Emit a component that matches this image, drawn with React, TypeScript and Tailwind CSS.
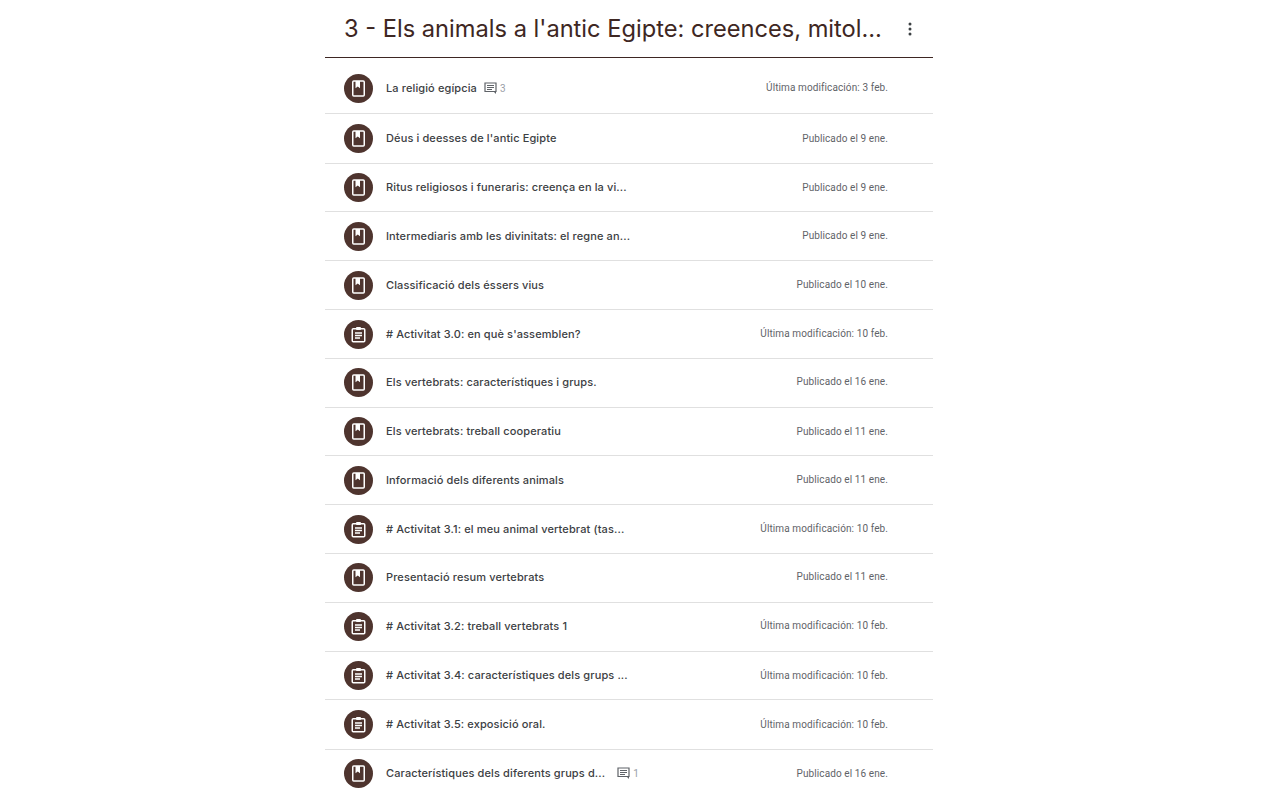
import React from 'react';

type Item = {
  title: string;
  date: string;
  kind: 'book' | 'task';
  comments?: number;
  height: string;
  commentGap?: string;
};

const items: Item[] = [
  { title: 'La religió egípcia', date: 'Última modificación: 3 feb.', kind: 'book', comments: 3, height: 'h-[56px] pt-[5px]' },
  { title: "Déus i deesses de l'antic Egipte", date: 'Publicado el 9 ene.', kind: 'book', height: 'h-[50px]' },
  { title: 'Ritus religiosos i funeraris: creença en la vi...', date: 'Publicado el 9 ene.', kind: 'book', height: 'h-[48px]' },
  { title: 'Intermediaris amb les divinitats: el regne an...', date: 'Publicado el 9 ene.', kind: 'book', height: 'h-[49px]' },
  { title: 'Classificació dels éssers vius', date: 'Publicado el 10 ene.', kind: 'book', height: 'h-[49px]' },
  { title: "# Activitat 3.0: en què s'assemblen?", date: 'Última modificación: 10 feb.', kind: 'task', height: 'h-[49px]' },
  { title: 'Els vertebrats: característiques i grups.', date: 'Publicado el 16 ene.', kind: 'book', height: 'h-[49px] pb-[2px]' },
  { title: 'Els vertebrats: treball cooperatiu', date: 'Publicado el 11 ene.', kind: 'book', height: 'h-[48px]' },
  { title: 'Informació dels diferents animals', date: 'Publicado el 11 ene.', kind: 'book', height: 'h-[49px]' },
  { title: '# Activitat 3.1: el meu animal vertebrat (tas...', date: 'Última modificación: 10 feb.', kind: 'task', height: 'h-[49px]' },
  { title: 'Presentació resum vertebrats', date: 'Publicado el 11 ene.', kind: 'book', height: 'h-[49px] pb-[2px]' },
  { title: '# Activitat 3.2: treball vertebrats 1', date: 'Última modificación: 10 feb.', kind: 'task', height: 'h-[49px] pb-[2px]' },
  { title: '# Activitat 3.4: característiques dels grups ...', date: 'Última modificación: 10 feb.', kind: 'task', height: 'h-[48px]' },
  { title: '# Activitat 3.5: exposició oral.', date: 'Última modificación: 10 feb.', kind: 'task', height: 'h-[50px]' },
  { title: 'Característiques dels diferents grups d...', date: 'Publicado el 16 ene.', kind: 'book', comments: 1, height: 'h-[47px]', commentGap: 'ml-[12px]' },
];

function BookIcon() {
  return (
    <svg width="17" height="17" viewBox="0 0 17 17" fill="none">
      <rect x="2.75" y="1" width="11.5" height="15" rx="1" stroke="white" strokeWidth="1.5" />
      <path d="M5.5 1h4.5v7.2L7.75 6.6 5.5 8.2z" fill="white" />
    </svg>
  );
}

function TaskIcon() {
  return (
    <svg width="17" height="17" viewBox="0 0 17 17" fill="none">
      <rect x="2.25" y="2.75" width="12.5" height="13" rx="1" stroke="white" strokeWidth="1.5" />
      <rect x="6" y="1" width="5" height="3" rx="1" fill="white" />
      <path d="M5 7h7M5 9.5h7M5 12h5" stroke="white" strokeWidth="1.3" />
    </svg>
  );
}

function CommentIcon() {
  return (
    <svg width="13" height="13" viewBox="0 0 13 13" fill="none" className="text-[#5f6368]">
      <path d="M1 1h11v8.5H1z" stroke="currentColor" strokeWidth="1.2" />
      <path d="M3 3.5h7M3 5.5h7M3 7.5h5" stroke="currentColor" strokeWidth="1" />
      <path d="M9.5 9.5l2.5 2.5V9.5z" fill="currentColor" />
    </svg>
  );
}

function Row({ item, last }: { item: Item; last: boolean }) {
  return (
    <div className={`flex items-center pl-[19px] box-border ${item.height} ${last ? '' : 'border-b border-[#e0e0e0]'}`}>
      <div className="w-[29px] h-[29px] rounded-full bg-[#4e342e] flex items-center justify-center shrink-0">
        {item.kind === 'book' ? <BookIcon /> : <TaskIcon />}
      </div>
      <div className="ml-[13px] text-[11px] font-medium text-[#3c4043] whitespace-nowrap tracking-[0.12px] font-['Inter','Liberation_Sans',sans-serif]">
        {item.title}
      </div>
      {item.comments !== undefined && (
        <div className={`flex items-center gap-[3px] text-[10px] text-[#9aa0a6] font-['Roboto',sans-serif] ${item.commentGap ?? 'ml-[7px]'}`}>
          <CommentIcon />
          <span>{item.comments}</span>
        </div>
      )}
      <div className="ml-auto mr-[45px] pb-[1px] text-[10px] text-[#5f6368] whitespace-nowrap tracking-[0.1px] font-['Roboto',sans-serif]">
        {item.date}
      </div>
    </div>
  );
}

export default function App() {
  return (
    <div className="h-[807px] overflow-hidden bg-white flex justify-center">
      <div className="w-[608px] ml-[-17px]">
        <div className="h-[58px] box-border border-b border-[#3e2723] flex items-center pl-[19px] pt-[1px]">
          <h1 className="text-[23.65px] leading-[32px] text-[#3e2723] whitespace-nowrap font-['Inter','Liberation_Sans',sans-serif]">
            3 - Els animals a l'antic Egipte: creences, mitol...
          </h1>
          <svg width="4" height="14" viewBox="0 0 4 14" className="ml-auto mr-[21px] shrink-0 text-[#3c4043]" fill="currentColor">
            <circle cx="2" cy="2" r="1.5" />
            <circle cx="2" cy="7" r="1.5" />
            <circle cx="2" cy="12" r="1.5" />
          </svg>
        </div>
        {items.map((item, i) => (
          <Row key={i} item={item} last={i === items.length - 1} />
        ))}
      </div>
    </div>
  );
}
